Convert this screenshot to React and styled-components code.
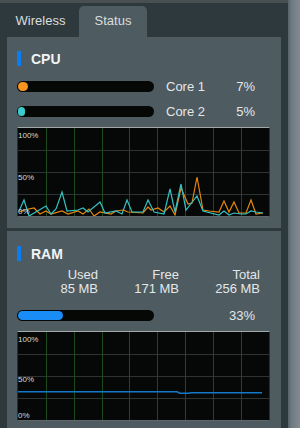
import styled, { createGlobalStyle } from 'styled-components';

const GlobalStyle = createGlobalStyle`
    html, body {
        margin: 0;
        padding: 0;
        background: #2e393e;
        font-family: "Liberation Sans", Arial, sans-serif;
        overflow: hidden;
    }
`;

const CPU_TEAL = [
    [1, 83], [6, 72], [11, 88], [28, 78], [33, 86], [38, 81], [44, 64], [49, 83], [60, 82],
    [65, 80], [70, 84], [82, 74], [87, 85], [98, 83], [104, 86], [109, 72], [114, 84],
    [125, 84], [130, 72], [136, 84], [146, 86], [152, 61], [157, 84], [163, 56], [168, 82],
    [179, 68], [185, 83], [201, 87], [206, 83], [211, 87], [216, 85], [223, 86], [228, 86],
    [233, 83], [238, 84], [245, 85],
];

const CPU_ORANGE = [
    [1, 84], [6, 82], [16, 80], [22, 86], [28, 83], [33, 86], [44, 83], [50, 86], [60, 83],
    [65, 86], [71, 81], [76, 88], [82, 84], [93, 86], [98, 83], [105, 82], [110, 84],
    [125, 85], [130, 79], [133, 82], [140, 80], [146, 84], [152, 78], [157, 87], [163, 60],
    [170, 76], [174, 75], [179, 49], [185, 82], [191, 83], [201, 84], [206, 73], [211, 84],
    [216, 74], [221, 85], [228, 85], [233, 72], [238, 86], [245, 85],
];

const RAM_LINE = [
    [0, 59.7], [159, 59.7], [162, 61.2], [171, 61.2], [173, 60.7], [244, 60.7],
];

const Page = styled.div`
    display: flex;
    width: 300px;
    height: 428px;
    overflow: hidden;
`;

const Main = styled.div`
    flex: 1;
    display: flex;
    flex-direction: column;
    gap: 3px;
    padding: 0 7px;
    border-top: 3px solid #4a4f51;
`;

const ScrollTrack = styled.div`
    width: 12px;
    flex: none;
    background: linear-gradient(to right, #56636a 0%, #6f7b81 30%, #808c92 100%);
`;

const Tabs = styled.div`
    display: flex;
    gap: 5px;
    padding-top: 3px;
    margin-bottom: -3px;
`;

const Tab = styled.div`
    width: ${(p) => p.$width}px;
    height: 31px;
    padding-bottom: 2px;
    box-sizing: border-box;
    display: flex;
    align-items: center;
    justify-content: center;
    font-size: 13px;
    color: #d9dddf;
    border-radius: 5px 5px 0 0;
    background: ${(p) => (p.$active ? '#4e5b60' : 'transparent')};
`;

const Card = styled.section`
    flex: none;
    background: #4e5b60;
    padding: ${(p) => p.$padTop}px 11px 11px 10px;
    display: flex;
    flex-direction: column;
`;

const Header = styled.div`
    display: flex;
    align-items: center;
    gap: 10px;
    height: 15px;
    font-size: 14px;
    font-weight: bold;
    color: #f2f4f5;
`;

const Accent = styled.span`
    width: 4px;
    height: 15px;
    background: #0a7df2;
`;

const Rows = styled.div`
    display: flex;
    flex-direction: column;
    gap: 14px;
    margin-top: 13px;
`;

const MeterRow = styled.div`
    display: grid;
    grid-template-columns: 137px 1fr auto;
    align-items: center;
    height: 11px;
    padding-right: 15px;
    font-size: 13px;
    line-height: 15px;
    color: #e4e7e8;
    white-space: nowrap;
`;

const MeterLabel = styled.span`
    margin-left: 12px;
`;

const Track = styled.div`
    height: 11px;
    border-radius: 6px;
    background: #050805;
    padding: 1px;
    box-sizing: border-box;
`;

const Fill = styled.div`
    height: 9px;
    border-radius: 5px;
    background: ${(p) => p.$color};
`;

const Percent = styled.span`
    text-align: right;
`;

const Chart = styled.div`
    position: relative;
    height: ${(p) => p.$height}px;
    margin-top: ${(p) => p.$gap}px;
    background: #050806;
    border-top: 1px solid #a3a8aa;
    border-left: 1px solid #1f2a6a;
    border-right: 1px solid #1f2a6a;
    border-bottom: 1px solid #5e6669;

    svg {
        display: block;
        width: 100%;
        height: 100%;
    }
`;

const AxisLabel = styled.span`
    position: absolute;
    left: 0;
    font-size: 8px;
    line-height: 9px;
    color: #d6d9da;
`;

const Stats = styled.div`
    display: grid;
    grid-template-columns: repeat(3, 81px);
    margin-top: 7px;
    font-size: 13px;
    line-height: 13.5px;
    color: #e4e7e8;
    text-align: right;
`;

const RamRow = styled(MeterRow)`
    margin-top: 13px;
`;

const toPoints = (pts) => pts.map(([x, y]) => `${x},${y}`).join(' ');

const Grid = ({ height }) => {
    const verticals = [1, 2, 3, 4, 5, 6, 7, 8].map((i) => Math.round(i * 27.85) + 0.5);
    const horizontals = [0.25, 0.5, 0.75].map((f) => Math.round(height * f) + 0.5);
    return (
        <g>
            {horizontals.map((y) => (
                <line key={y} x1="0" x2="253" y1={y} y2={y} stroke="#2e3333" strokeWidth="1" />
            ))}
            {verticals.map((x) => (
                <line key={x} x1={x} x2={x} y1="0" y2={height} stroke="#1c4a1e" strokeWidth="1" />
            ))}
        </g>
    );
};

const Meter = ({ label, value, color }) => (
    <MeterRow>
        <Track>
            <Fill $color={color} style={{ width: `${Math.max(value * 1.37, 6)}px` }} />
        </Track>
        <MeterLabel>{label}</MeterLabel>
        <Percent>{value}%</Percent>
    </MeterRow>
);

const App = () => {
    return (
        <Page>
            <GlobalStyle />
            <Main>
                <Tabs>
                    <Tab $width={67}>Wireless</Tab>
                    <Tab $width={68} $active>
                        Status
                    </Tab>
                </Tabs>

                <Card $padTop={14}>
                    <Header>
                        <Accent />
                        CPU
                    </Header>
                    <Rows>
                        <Meter label="Core 1" value={7} color="#f7931e" />
                        <Meter label="Core 2" value={5} color="#3ccbcb" />
                    </Rows>
                    <Chart $height={88} $gap={12}>
                        <svg viewBox="0 0 251 88" preserveAspectRatio="none">
                            <Grid height={88} />
                            <polyline points={toPoints(CPU_ORANGE)} fill="none" stroke="#e5850f" strokeWidth="1.2" />
                            <polyline points={toPoints(CPU_TEAL)} fill="none" stroke="#35c1c3" strokeWidth="1.2" />
                        </svg>
                        <AxisLabel style={{ top: 3 }}>100%</AxisLabel>
                        <AxisLabel style={{ top: 45 }}>50%</AxisLabel>
                        <AxisLabel style={{ bottom: 0 }}>0%</AxisLabel>
                    </Chart>
                </Card>

                <Card $padTop={15}>
                    <Header>
                        <Accent />
                        RAM
                    </Header>
                    <Stats>
                        <span>Used</span>
                        <span>Free</span>
                        <span>Total</span>
                        <span>85 MB</span>
                        <span>171 MB</span>
                        <span>256 MB</span>
                    </Stats>
                    <RamRow>
                        <Track>
                            <Fill $color="#1a8cf5" style={{ width: `${33 * 1.37}px` }} />
                        </Track>
                        <span />
                        <Percent>33%</Percent>
                    </RamRow>
                    <Chart $height={88} $gap={12}>
                        <svg viewBox="0 0 251 88" preserveAspectRatio="none">
                            <Grid height={88} />
                            <polyline points={toPoints(RAM_LINE)} fill="none" stroke="#1479c9" strokeWidth="1.6" />
                        </svg>
                        <AxisLabel style={{ top: 3 }}>100%</AxisLabel>
                        <AxisLabel style={{ top: 43 }}>50%</AxisLabel>
                        <AxisLabel style={{ bottom: 0 }}>0%</AxisLabel>
                    </Chart>
                </Card>
            </Main>
            <ScrollTrack />
        </Page>
    );
};

export default App;
